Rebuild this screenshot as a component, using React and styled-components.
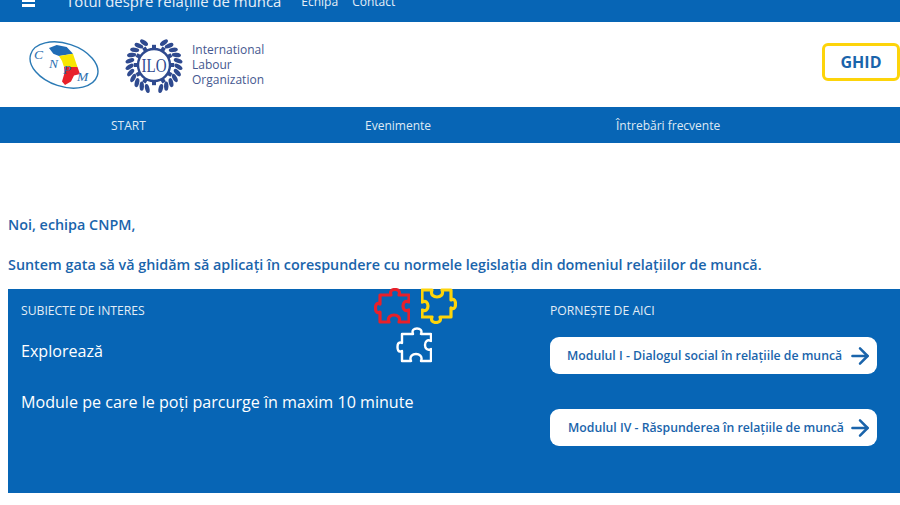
import React from 'react';
import styled, { createGlobalStyle } from 'styled-components';
import { ArrowRight } from 'lucide-react';

const BLUE = '#0765b5';
const FONT = "'Open Sans', 'Noto Sans', sans-serif";

const GlobalStyle = createGlobalStyle`
  html, body {
    margin: 0;
    padding: 0;
    background: #fff;
    overflow: hidden;
    font-family: ${FONT};
  }
`;

const Page = styled.div`
  width: 900px;
  height: 505px;
  overflow: hidden;
  background: #fff;
`;

const TopBar = styled.div`
  height: 22px;
  background: ${BLUE};
  display: flex;
  align-items: flex-end;
  overflow: hidden;
  color: #e8f0f8;
  padding: 0 0 11px 22px;
  box-sizing: border-box;
`;

const Burger = styled.div`
  width: 13px;
  height: 7px;
  margin-right: 31px;
  flex-shrink: 0;
  align-self: flex-end;
  margin-bottom: 4px;
  background: linear-gradient(#fff 0 2px, transparent 2px 4px, #fff 4px 7px);
`;

const SiteTitle = styled.div`
  font-size: 14.9px;
  line-height: 20px;
  margin-right: 20px;
  white-space: nowrap;
`;

const TopLink = styled.div`
  font-size: 12px;
  line-height: 18px;
  margin-right: 14px;
  white-space: nowrap;
`;

const Header = styled.header`
  height: 85px;
  display: flex;
  align-items: center;
  justify-content: space-between;
  padding-left: 28px;
  box-sizing: border-box;
`;

const Logos = styled.div`
  display: flex;
  align-items: center;
  gap: 24px;
`;

const IloWrap = styled.div`
  display: flex;
  align-items: center;
  gap: 8px;
`;

const IloText = styled.div`
  font-size: 12px;
  line-height: 15px;
  color: #45588f;
`;

const GhidButton = styled.div`
  width: 78px;
  height: 38px;
  box-sizing: border-box;
  margin-bottom: 5px;
  border: 3px solid #fdd40a;
  border-radius: 6px;
  display: flex;
  align-items: center;
  justify-content: center;
  font-size: 16px;
  font-weight: 700;
  color: #1a64ab;
`;

const Nav = styled.nav`
  height: 36px;
  background: ${BLUE};
  display: grid;
  grid-template-columns: 254px 251px auto;
  align-items: center;
  padding-left: 111px;
  color: #dfe9f4;
  font-size: 12px;
`;

const Intro = styled.section`
  padding: 72px 8px 0;
  color: #1a64ab;
  font-size: 14.35px;
  font-weight: 600;
  line-height: 20px;
`;

const IntroLine = styled.p`
  margin: 0 0 20px;
  white-space: nowrap;
`;

const Panel = styled.section`
  position: relative;
  margin: -6px 0 0 8px;
  height: 204px;
  background: ${BLUE};
  display: grid;
  grid-template-columns: 529px 327px;
  padding: 13px 0 0 13px;
  box-sizing: border-box;
  color: #fff;
`;

const Column = styled.div`
  display: flex;
  flex-direction: column;
`;

const Label = styled.div`
  font-size: 12.2px;
  line-height: 18px;
  color: #e3edf6;
  margin-bottom: ${({ $gap }) => $gap}px;
`;

const Lead = styled.div`
  font-size: 16.1px;
  line-height: 22px;
  margin-bottom: ${({ $gap }) => $gap || 0}px;
  white-space: nowrap;
`;

const ModuleButton = styled.div`
  height: 37px;
  background: #fff;
  border-radius: 9px;
  display: flex;
  align-items: center;
  justify-content: space-between;
  padding: 0 4px 0 ${({ $inset }) => $inset}px;
  margin-bottom: 35px;
  color: #1a64ab;
  font-size: 12.25px;
  font-weight: 600;
  white-space: nowrap;
`;

const PuzzleSvg = styled.svg`
  position: absolute;
  left: ${({ $x }) => $x}px;
  top: ${({ $y }) => $y}px;
  transform: ${({ $flip }) => ($flip ? 'rotate(180deg)' : 'none')};
`;

const Puzzle = ({ color, x, y, flip, weight = 3.2 }) => (
  <PuzzleSvg $x={x} $y={y} $flip={flip} width="36" height="36" viewBox="0 0 36 36" fill="none">
    <path
      d="M6 7H17C15.5 3 18 1.5 21 1.5S26.5 3 25 7H35V14C31 12 29 15 29 18S31 24 35 22V34H25C27 29 23 27 20 27S13 29 15 34H6V24C2 26 1.5 22 1.5 20S2 14 6 16Z"
      stroke={color}
      strokeWidth={weight}
      strokeLinejoin="round"
    />
  </PuzzleSvg>
);

const CnpmLogo = () => (
  <svg width="72" height="52" viewBox="0 0 72 52">
    <ellipse cx="36" cy="26" rx="35" ry="21.5" transform="rotate(18 36 26)" fill="none" stroke="#2b7ab5" strokeWidth="1.4" />
    <path d="M21 9L28.7 6L38.7 8L45 14.7L31 17L25.3 14.7Z" fill="#1f6cb5" />
    <path d="M31 17L45 14.7L48 23.7L49.5 28H36L34 22Z" fill="#f7e600" />
    <path d="M36 28H49.5L52 35L46 36.5L43 42.5L37 46L34 42.5L36.5 34Z" fill="#e8202a" />
    <g fill="#2b6fb0" fontFamily="'Liberation Serif', serif" fontStyle="italic" fontSize="13.5">
      <text x="6" y="20">C</text>
      <text x="21" y="29">N</text>
      <text x="35" y="35">P</text>
      <text x="49" y="42">M</text>
    </g>
  </svg>
);

const leaves = [24, 38, 52, 66, 80, 94, 108, 122, 136, 150, 164];
const teeth = [0, 30, 60, 90, 120, 150, 180, 210, 240, 270, 300, 330];

const IloLogo = () => (
  <svg width="60" height="60" viewBox="-1 -5 60 60">
    <g fill="#2f4a8f">
      {leaves.flatMap((a) => [a, -a]).map((a) => (
        <ellipse key={a} cx="29" cy="0.5" rx="2.2" ry="4.6" transform={`rotate(${a} 29 25) rotate(${a > 0 ? 30 : -30} 29 0.5)`} />
      ))}
      {teeth.map((a) => (
        <rect key={a} x="27" y="4.8" width="4" height="4.4" transform={`rotate(${a} 29 25)`} />
      ))}
    </g>
    <circle cx="29" cy="25" r="16" fill="#fff" stroke="#2f4a8f" strokeWidth="2.4" />
    <text x="29" y="31.5" textAnchor="middle" fill="#2f4a8f" fontFamily="'Liberation Serif', serif" fontSize="18" textLength="25" lengthAdjust="spacingAndGlyphs">ILO</text>
  </svg>
);

const App = () => (
  <Page>
    <GlobalStyle />
    <TopBar>
      <Burger />
      <SiteTitle>Totul despre relațiile de muncă</SiteTitle>
      <TopLink>Echipa</TopLink>
      <TopLink>Contact</TopLink>
    </TopBar>
    <Header>
      <Logos>
        <CnpmLogo />
        <IloWrap>
          <IloLogo />
          <IloText>International<br />Labour<br />Organization</IloText>
        </IloWrap>
      </Logos>
      <GhidButton>GHID</GhidButton>
    </Header>
    <Nav>
      <span>START</span>
      <span>Evenimente</span>
      <span>Întrebări frecvente</span>
    </Nav>
    <Intro>
      <IntroLine>Noi, echipa CNPM,</IntroLine>
      <IntroLine>Suntem gata să vă ghidăm să aplicați în corespundere cu normele legislația din domeniul relațiilor de muncă.</IntroLine>
    </Intro>
    <Panel>
      <Puzzle color="#e8202a" x={366} y={-1} />
      <Puzzle color="#fdd40a" x={413} y={-1} flip />
      <Puzzle color="#fff" x={388} y={38} weight={2.4} />
      <Column>
        <Label $gap={20}>SUBIECTE DE INTERES</Label>
        <Lead $gap={29}>Explorează</Lead>
        <Lead>Module pe care le poți parcurge în maxim 10 minute</Lead>
      </Column>
      <Column>
        <Label $gap={17}>PORNEȘTE DE AICI</Label>
        <ModuleButton $inset={17}>
          Modulul I - Dialogul social în relațiile de muncă
          <ArrowRight size={26} strokeWidth={2.3} />
        </ModuleButton>
        <ModuleButton $inset={18}>
          Modulul IV - Răspunderea în relațiile de muncă
          <ArrowRight size={26} strokeWidth={2.3} />
        </ModuleButton>
      </Column>
    </Panel>
  </Page>
);

export default App;
